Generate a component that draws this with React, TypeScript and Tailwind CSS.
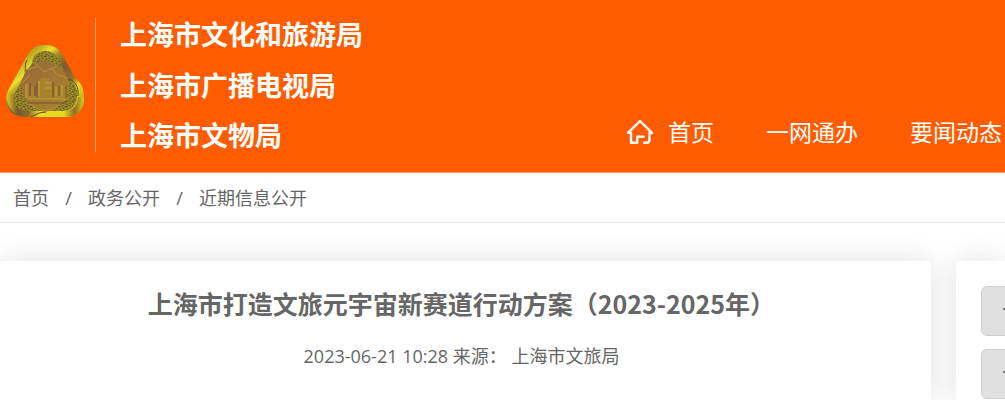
import React from 'react';

const departments = ['上海市文化和旅游局', '上海市广播电视局', '上海市文物局'];

const crumbs = ['首页', '政务公开', '近期信息公开'];

const Emblem: React.FC = () => (
  <svg viewBox="0 0 78 73" className="w-[78px] h-[73px] shrink-0" role="img" aria-label="上海文旅">
    <defs>
      <linearGradient id="rim" x1="0" y1="0" x2="1" y2="1">
        <stop offset="0.15" stopColor="#a88c1c" />
        <stop offset="0.24" stopColor="#c4b222" />
        <stop offset="0.32" stopColor="#ece42a" />
        <stop offset="0.4" stopColor="#a08820" />
        <stop offset="0.52" stopColor="#805a34" />
        <stop offset="0.66" stopColor="#94702c" />
        <stop offset="0.74" stopColor="#e6dc22" />
        <stop offset="1" stopColor="#a08420" />
      </linearGradient>
      <linearGradient id="base" x1="0" y1="0" x2="1" y2="0">
        <stop offset="0" stopColor="#d8cc22" />
        <stop offset="0.14" stopColor="#7b5630" />
        <stop offset="0.28" stopColor="#8c6a28" />
        <stop offset="0.42" stopColor="#e8de20" />
        <stop offset="0.74" stopColor="#e2d81e" />
        <stop offset="0.88" stopColor="#8c6c28" />
        <stop offset="1" stopColor="#d8cc22" />
      </linearGradient>
      <linearGradient id="disc" x1="0" y1="0" x2="1" y2="1">
        <stop offset="0" stopColor="#94683a" />
        <stop offset="0.5" stopColor="#a27634" />
        <stop offset="1" stopColor="#a8862c" />
      </linearGradient>
      <pattern id="grain" width="7" height="5" patternUnits="userSpaceOnUse">
        <rect width="7" height="5" fill="#8c7c26" />
        <path d="M0 0h1v1H0zM3 1h2v1H3zM1 3h1v1H1zM5 4h1v1H5z" fill="#685422" />
        <path d="M2 0h1v1H2zM6 2h1v1H6zM3 3h1v1H3zM0 4h1v1H0z" fill="#a89a2e" />
      </pattern>
    </defs>
    {/* Outer rim */}
    <path
      d="M39 0C47 0 52 3 56 9L69 33C75 37 78 44 78 53C78 65 71 72 60 72H20C8 72 0 66 0 54C0 49 2 45 5 40L21 11C25 3 31 0 39 0Z"
      fill="url(#rim)"
    />
    <path d="M1 48C-1 61 8 72 20 72H60C71 72 78 65 78 53L72 52C72 61 67 66 58 66H21C12 66 7 61 7 51Z" fill="url(#base)" />
    {/* Stippled lobes */}
    <path d="M26 18C27 9 33 6 40 6C48 6 51 12 55 19L62 34C69 37 72 44 71 52C70 61 64 66 56 66H23C12 66 6 60 8 50L18 31Z" fill="url(#grain)" />
    <path d="M21 15C18 21 20 25 19 32M62 34C69 35 73 42 72 51M25 72C31 69 34 67 40 67" fill="none" stroke="#5f4626" strokeWidth="1" />
    {/* Disc with skyline */}
    <path d="M39 16L53 21L62 33L63 45L58 57L48 65L38 67L26 61L17 51L15 38L20 25L29 18Z" fill="url(#disc)" />
    <path d="M29 18L38 27L51 21M20 25L31 22M16 38L24 30M61 33L52 30L46 24M27 62L39 66L52 61M20 58L29 61" fill="none" stroke="#b4903a" strokeWidth="1" />
    <path
      d="M20 54V39L23 37V50H25V42L28 40V50H32V36L35 35V33H43V36H46V51H49V42L52 40V50H55V40H58V38L61 41V54Z"
      fill="#a8822c"
    />
    <path d="M24 38V51M29 41V51M31 38V52M47 37V52M53 41V51M60 41V54" fill="none" stroke="#744f26" strokeWidth="1" />
    <path d="M20 39V53M33 36V51M39 38H45M39 43H45M50 42V51M56 40V51" fill="none" stroke="#c4a43a" strokeWidth="1" />
    <path d="M22 54H62" stroke="#bd9c32" strokeWidth="1" />
    <path d="M21 58H60" stroke="#75542a" strokeWidth="1" />
  </svg>
);

const HomeIcon: React.FC = () => (
  <svg
    viewBox="0 0 28 26"
    className="w-7 h-[26px]"
    fill="none"
    stroke="currentColor"
    strokeWidth="2.4"
    strokeLinecap="round"
    strokeLinejoin="round"
    aria-hidden="true"
  >
    <path d="M17.5 17.7H11.2V23.8H5V13.8H2L14 2L26 13.8H23.5V20.8Q23.5 23.8 20.5 23.8H18" />
  </svg>
);

const Header: React.FC = () => (
  <header className="flex justify-between bg-[#ff5c00] border-b border-[#ff9b5c] text-white overflow-hidden">
    <div className="flex items-start pt-[18px] pb-5 pl-[6px]">
      <div className="pt-[27px]">
        <Emblem />
      </div>
      <div className="ml-[11px] pl-6 pt-px border-l border-[#ff9d66] h-[134px] flex flex-col justify-between shrink-0">
        {departments.map((name) => (
          <p key={name} className="text-[27px] leading-8 font-bold whitespace-nowrap">
            {name}
          </p>
        ))}
      </div>
    </div>
    <nav className="flex items-end gap-[52px] pb-[22px] pr-[3px] text-[23px] leading-9 whitespace-nowrap shrink-0">
      <a href="#home" className="flex items-center gap-[14px]">
        <HomeIcon />
        首页
      </a>
      <a href="#service">一网通办</a>
      <a href="#news">要闻动态</a>
    </nav>
  </header>
);

const Breadcrumb: React.FC = () => (
  <nav aria-label="面包屑" className="border-b border-[#e5e5e5] px-[13px] pt-[13px] pb-[11px] text-lg leading-[25px]">
    <ol className="flex">
      {crumbs.map((crumb, i) => (
        <li key={crumb} className="flex">
          {i > 0 && <span className="w-[39px] text-center">/</span>}
          <a href="#crumb">{crumb}</a>
        </li>
      ))}
    </ol>
  </nav>
);

const SideButton: React.FC<{ label: string }> = ({ label }) => (
  <button
    type="button"
    aria-label={label}
    className="w-40 h-[50px] rounded-md border border-[#cfcfcf] bg-[#e0e0e0] pl-[21px] flex items-center"
  >
    <span className="w-1 h-0.5 mb-1 bg-[#777]" />
  </button>
);

export default function App() {
  return (
    <div className="min-h-screen flex flex-col overflow-hidden bg-white text-[#666] font-['Open_Sans','Noto_Sans_CJK_SC',sans-serif]">
      <Header />
      <Breadcrumb />
      <main className="grow flex gap-[25px] pt-[38px] overflow-hidden">
        <article className="grow rounded-t bg-white shadow-[0_0_30px_rgba(0,0,0,0.12)] pl-4 pr-6 pt-6 text-center">
          <h1 className="text-[25px] leading-9 font-bold font-['Noto_Sans_CJK_SC',sans-serif]">
            上海市打造文旅元宇宙新赛道行动方案（2023-2025年）
          </h1>
          <p className="mt-[22px] text-lg leading-[26px]">
            <time>2023-06-21 10:28</time> 来源： 上海市文旅局
          </p>
        </article>
        <aside className="w-[49px] shrink-0 rounded-tl bg-white shadow-[0_0_30px_rgba(0,0,0,0.12)] pl-[25px] pt-[25px] flex flex-col gap-[13px]">
          <SideButton label="上一篇" />
          <SideButton label="下一篇" />
        </aside>
      </main>
    </div>
  );
}
